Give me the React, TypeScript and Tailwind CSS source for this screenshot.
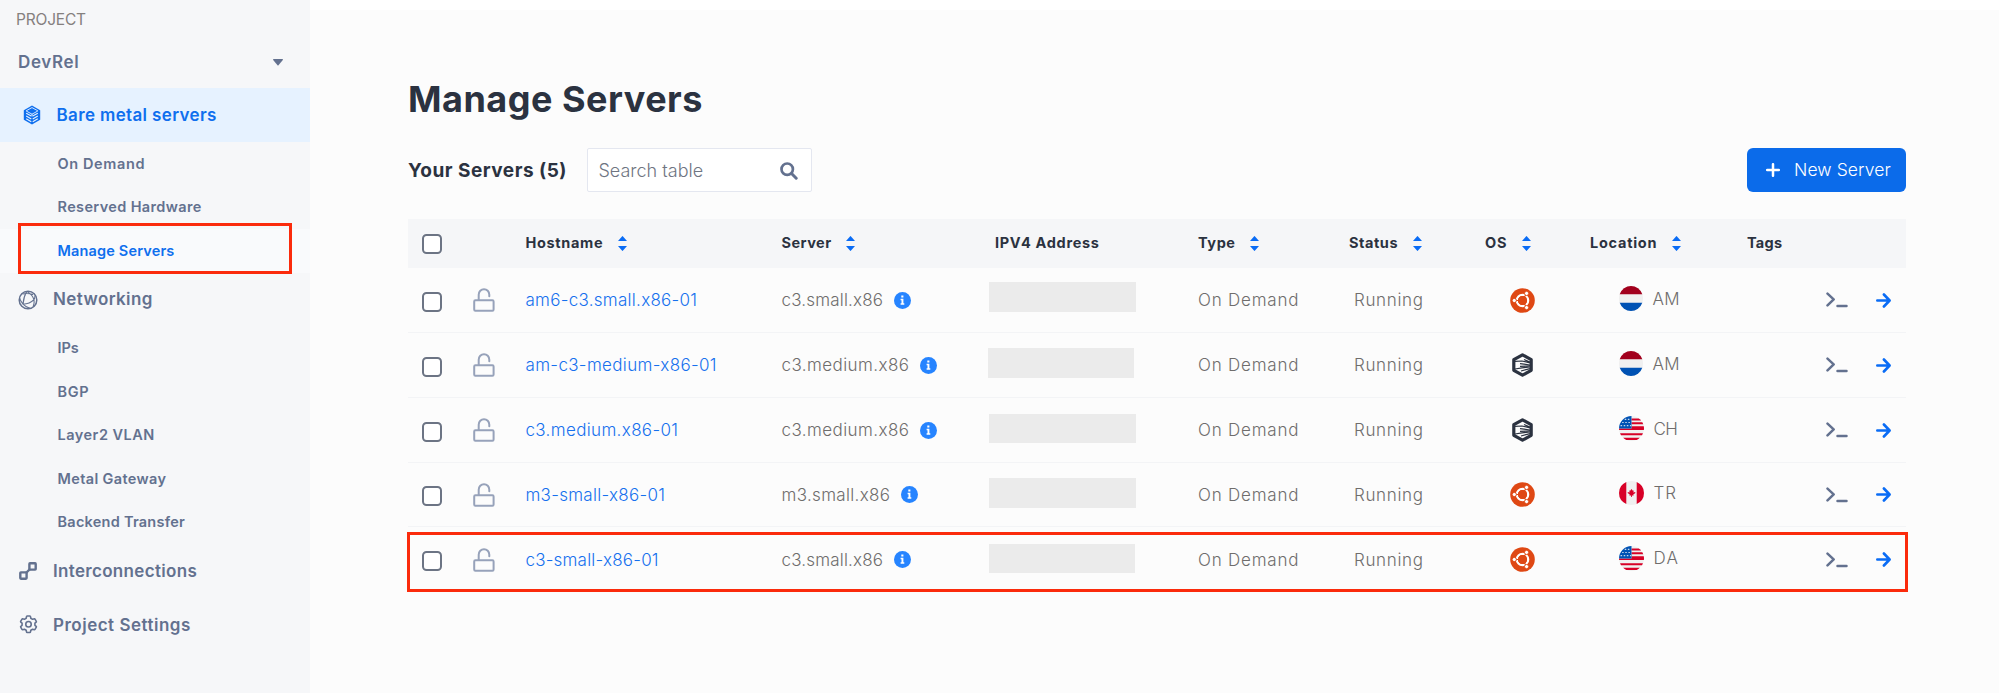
import type { ReactNode } from "react";

type Country = "NL" | "US" | "CA";

interface Row {
  host: string;
  hostTrack: string;
  server: string;
  serverTrack: string;
  ipClass: string;
  os: "ubuntu" | "rocky";
  flag: Country;
  loc: string;
  locTrack: string;
  height: string;
}

const ROWS: Row[] = [
  { host: "am6-c3.small.x86-01", hostTrack: "tracking-[0.28px]", server: "c3.small.x86", serverTrack: "tracking-[0.18px]", ipClass: "ml-[0.5px] mb-[6px]", os: "ubuntu", flag: "NL", loc: "AM", locTrack: "tracking-[0.25px]", height: "h-[65px]" },
  { host: "am-c3-medium-x86-01", hostTrack: "tracking-[0.34px]", server: "c3.medium.x86", serverTrack: "tracking-[0.43px]", ipClass: "-ml-[1px] mb-[4px]", os: "rocky", flag: "NL", loc: "AM", locTrack: "tracking-[0.25px]", height: "h-[65px]" },
  { host: "c3.medium.x86-01", hostTrack: "tracking-[0.35px]", server: "c3.medium.x86", serverTrack: "tracking-[0.43px]", ipClass: "ml-[0.5px] mb-[3px]", os: "rocky", flag: "US", loc: "CH", locTrack: "tracking-[-0.6px]", height: "h-[65px]" },
  { host: "m3-small-x86-01", hostTrack: "tracking-[0.28px]", server: "m3.small.x86", serverTrack: "tracking-[0.33px]", ipClass: "ml-[0.5px] mb-[3px]", os: "ubuntu", flag: "CA", loc: "TR", locTrack: "tracking-[0.9px]", height: "h-[64px]" },
  { host: "c3-small-x86-01", hostTrack: "tracking-[0.2px]", server: "c3.small.x86", serverTrack: "tracking-[0.18px]", ipClass: "mb-[2px]", os: "ubuntu", flag: "US", loc: "DA", locTrack: "tracking-[1.2px]", height: "h-[65px]" },
];

const GRID =
  "grid grid-cols-[51px_52.5px_256px_207px_209.5px_151px_136px_105px_157px_79px_50px_30px] pl-[14px] items-center";

function CubeIcon() {
  return (
    <svg width="18" height="20" viewBox="0 0 18 20" fill="none">
      <path d="M9 .6 17.2 5.2V14.8L9 19.4.8 14.8V5.2Z" fill="#0f6fee" />
      <path d="M3.200 8.200 8.300 11.100M3.200 11 8.300 13.900M3.200 13.800 8.300 16.700M14.800 8.200 9.700 11.100M14.800 11 9.700 13.900M14.800 13.800 9.700 16.700" stroke="#e6f2ff" strokeWidth="1.100" />
      <path d="M9 9v2.500M3.200 5.800 9 2.600l5.800 3.200" stroke="#e6f2ff" strokeWidth=".9" />
      <path d="M3.200 6 9 9.200 14.800 6" stroke="#e6f2ff" strokeWidth=".9" />
    </svg>
  );
}

function GlobeIcon() {
  return (
    <svg width="20" height="20" viewBox="0 0 20 20" fill="none" stroke="#63718f" strokeWidth="1.1">
      <circle cx="10" cy="10" r="8.8" strokeWidth="1.5" />
      <path d="M8.800 1.400C6.600 5 5.400 9 5 14.200M8.800 1.400c3.400 2 6 4.600 7.200 8.200M5 14.200c4.400-.2 8.200-1.800 11-4.600M5 14.200C3.400 12 2 10 1.600 8M5 14.200c2 2 4.400 3.600 7 4.200M16 9.600c.4 2.600.2 5-.8 7M16 9.600c.8-1.200 1-2.600 1-4M4.400 4c3.400-.8 7.200-.6 10.800.6" />
    </svg>
  );
}

function LinkIcon() {
  return (
    <svg width="18" height="18" viewBox="0 0 18 18" fill="none" stroke="#63718f" strokeWidth="2.4" className="ml-px">
      <rect x="1.3" y="10.4" width="6.300" height="6.300" rx=".6" />
      <rect x="10.400" y="1.300" width="6.300" height="6.300" rx=".6" />
      <path d="M7 11 11 7" />
    </svg>
  );
}

function GearIcon() {
  return (
    <svg width="19" height="20" viewBox="0 0 18 19" fill="none" stroke="#63718f" strokeWidth="1.5" strokeLinejoin="round" className="ml-[0.5px]">
      <path d="M7.700 1h2.600q.5.100.6.600l.3 1.500 1.700 1 1.500-.5q.5-.2.800.3l1.200 2.100q.300.5-.1.800l-1.200 1v2l1.200 1q.400.4.1.800l-1.200 2.100q-.300.5-.8.300l-1.500-.5-1.700 1-.3 1.500q-.1.600-.6.600H7.700q-.5 0-.6-.6l-.3-1.500-1.700-1-1.500.5q-.5.200-.8-.3l-1.200-2.100q-.300-.5.1-.8l1.200-1v-2l-1.200-1q-.400-.4-.1-.8l1.200-2.100q.300-.5.8-.3l1.500.5 1.700-1 .3-1.500q.1-.5.600-.600Z" />
      <circle cx="9" cy="8.800" r="2.600" />
    </svg>
  );
}

function SortIcon() {
  return (
    <svg width="9" height="15" viewBox="0 0 9 15" fill="#0a6cf5" className="shrink-0">
      <path d="M4.200.2q.3-.3.600 0L9 5H0ZM4.200 14.800q.3.300.6 0L9 10H0Z" />
    </svg>
  );
}

function LockIcon() {
  return (
    <svg width="22" height="24" viewBox="0 0 22 24" fill="none" stroke="#97a2ba" strokeWidth="2">
      <rect x="1.200" y="12.200" width="19.400" height="10.600" rx="1.200" />
      <path d="M5.700 12V6.700a5.300 5.500 0 0 1 10.600 0V8.200" strokeLinecap="round" />
    </svg>
  );
}

function InfoIcon() {
  return (
    <svg width="17" height="17" viewBox="0 0 17 17" className="shrink-0">
      <circle cx="8.500" cy="8.500" r="8.500" fill="#2684ff" />
      <path d="M7.300 3.600h2.100v2H7.300ZM6.600 6.800h2.800v4.500h.9v1.400H6.600v-1.400h.9V8.200h-.9Z" fill="#fff" />
    </svg>
  );
}

function UbuntuIcon() {
  return (
    <svg width="25" height="25" viewBox="0 0 25 25" fill="none">
      <circle cx="12.500" cy="12.500" r="12.300" fill="#df4814" />
      <circle cx="12.500" cy="12.500" r="5.700" stroke="#fff" strokeWidth="2.200" />
      <path d="M12.500 12.500 3 12.500M12.500 12.500 17.200 4.300M12.500 12.500 17.200 20.700" stroke="#df4814" strokeWidth="1.200" />
      <circle cx="12.500" cy="12.500" r="4.500" fill="#df4814" />
      <g fill="#fff" stroke="#df4814" strokeWidth=".9">
        <circle cx="4.300" cy="12.500" r="2.100" />
        <circle cx="16.600" cy="5.400" r="2.100" />
        <circle cx="16.600" cy="19.600" r="2.100" />
      </g>
    </svg>
  );
}

function RockyIcon() {
  return (
    <svg width="21" height="24" viewBox="0 0 21 24" fill="none">
      <path d="M10.500 1.800 19.200 6.700V17.300L10.500 22.200 1.800 17.300V6.700Z" fill="#fcfcfc" stroke="#2b3240" strokeWidth="3.200" strokeLinejoin="round" />
      <path d="M3 8.300 10 8 18 9.800M8 10.700 18 12M8 13.300 18 13M3 16 10 14.800 18 14M9 18 18 15.600M12 6.500 18 9" stroke="#2b3240" strokeWidth="1.200" />
    </svg>
  );
}

function Flag({ code }: { code: Country }) {
  if (code === "NL") {
    return (
      <svg width="24" height="25" viewBox="0 0 24 24" preserveAspectRatio="none">
        <circle cx="12" cy="12" r="12" fill="#f0f0f0" />
        <path d="M.7 8a12 12 0 0 1 22.600 0Z" fill="#a2001d" />
        <path d="M.7 16a12 12 0 0 0 22.600 0Z" fill="#0052b4" />
      </svg>
    );
  }
  if (code === "CA") {
    return (
      <svg width="25" height="24" viewBox="0 0 24 24" preserveAspectRatio="none">
        <circle cx="12" cy="12" r="12" fill="#f0f0f0" />
        <path d="M7 1.100a12 12 0 0 0 0 21.800ZM17 1.100a12 12 0 0 1 0 21.800Z" fill="#d80027" />
        <path d="m12 7.900-1.300 1.800-.9-.3.400 2-1.700-.5-.2 1.200 2 1.500-.4.900h1.700v1.600h.8v-1.600h1.700l-.4-.9 2-1.500-.2-1.200-1.700.5.400-2-.9.300Z" fill="#d80027" />
      </svg>
    );
  }
  return (
    <svg width="25" height="25" viewBox="0 0 24 24" fill="none">
      <path d="M12 0A12 12 0 1 1 0 12H12Z" fill="#f0f0f0" />
      <path d="M12 2.300h7q1.100.7 2 1.600v.3H12ZM12 6h10.400l.9 2H12ZM12 9.800h11.800q.2 1.100.2 2.200H12ZM0 12h24q0 1-.2 1.500H.200Q0 13 0 12ZM1 16.500h22l-.9 2H1.900ZM4 20.900h16q-1.400 1.400-3 2.100H7q-1.600-.7-3-2.100Z" fill="#d80027" />
      <path d="M12 0v12H0A12 12 0 0 1 12 0Z" fill="#0052b4" />
      <path d="M5.500 3.200h6M3 6.200h9M1.500 9.300h10" stroke="#c3d5ea" strokeWidth="1.100" strokeDasharray="1.500 1.500" />
    </svg>
  );
}

function TerminalIcon() {
  return (
    <svg width="22" height="16" viewBox="0 0 22 16" fill="none" stroke="#63718f" strokeWidth="2.500" strokeLinecap="round" strokeLinejoin="round">
      <path d="M1.500 1.600 7.700 7.300 1.500 13.400M11.500 14h9" />
    </svg>
  );
}

function ArrowIcon() {
  return (
    <svg width="15" height="15" viewBox="0 0 15 15" fill="none" stroke="#0a6cf5" strokeWidth="2.600" strokeLinecap="round" strokeLinejoin="round">
      <path d="M1.300 7.500h12M7.900 1.500 13.600 7.500 7.900 13.500" />
    </svg>
  );
}

function Checkbox() {
  return <div className="size-5 rounded-[4.5px] border-2 border-[#6c7484] bg-white" />;
}

function NavHeading({ icon, label, track }: { icon: ReactNode; label: string; track: string }) {
  return (
    <div className="flex h-[54px] items-center pl-[18px]">
      <span className="flex w-[35px] items-center">{icon}</span>
      <span className={`text-[17px] leading-none font-semibold ${track}`}>{label}</span>
    </div>
  );
}

function SubItem({ label, track, active = false }: { label: string; track: string; active?: boolean }) {
  return (
    <div
      className={`flex h-[43.5px] items-center pl-[57.5px] text-[14.5px] leading-none font-semibold ${track} ${active ? "bg-[#f9fafc] text-[#0f6fee]" : ""}`}
    >
      {label}
    </div>
  );
}

function Head({ label, track, gap = "", sortable = true }: { label: string; track: string; gap?: string; sortable?: boolean }) {
  return (
    <div className={`flex items-center text-[14.5px] leading-none font-bold whitespace-nowrap ${gap}`}>
      <span className={track}>{label}</span>
      {sortable && <SortIcon />}
    </div>
  );
}

export default function App() {
  return (
    <div className="relative flex h-[693px] w-[1999px] overflow-hidden bg-[#fcfcfc] font-['Inter','Liberation_Sans',sans-serif]">
      <aside className="flex w-[309.5px] shrink-0 flex-col bg-[#f6f7f9] text-[#63718f]">
        <div className="flex h-[38px] items-center pt-[2px] pl-[16px] text-[15.5px] leading-none tracking-[-0.2px] text-[#85807f]">PROJECT</div>
        <div className="flex h-[50px] items-center justify-between pr-[27px] pb-[2px] pl-[18px]">
          <span className="text-[17px] leading-none font-semibold tracking-[0.65px]">DevRel</span>
          <svg width="10" height="7" viewBox="0 0 10 7" fill="#63718f">
            <path d="M.5 0h9q.7.300.3.900L5.500 6.300q-.5.400-1 0L.2.900Q-.1.200.5 0Z" />
          </svg>
        </div>
        <div className="flex h-[54px] items-center bg-[#e6f2ff] pl-[23px] text-[#0f6fee]">
          <span className="w-[33.5px]"><CubeIcon /></span>
          <span className="text-[17px] leading-none font-semibold tracking-[0.36px]">Bare metal servers</span>
        </div>
        <SubItem label="On Demand" track="tracking-[0.62px]" />
        <SubItem label="Reserved Hardware" track="tracking-[0.36px]" />
        <SubItem label="Manage Servers" track="tracking-[0.16px]" active />
        <NavHeading icon={<GlobeIcon />} label="Networking" track="tracking-[0.4px]" />
        <SubItem label="IPs" track="" />
        <SubItem label="BGP" track="tracking-[0.7px]" />
        <SubItem label="Layer2 VLAN" track="tracking-[0.5px]" />
        <SubItem label="Metal Gateway" track="tracking-[0.36px]" />
        <SubItem label="Backend Transfer" track="tracking-[0.25px]" />
        <NavHeading icon={<LinkIcon />} label="Interconnections" track="tracking-[0.32px]" />
        <NavHeading icon={<GearIcon />} label="Project Settings" track="tracking-[0.5px]" />
      </aside>

      <main className="flex flex-1 flex-col text-[#2b3240]">
        <div className="h-[9.5px] bg-white" />
        <div className="flex flex-col pr-[93px] pl-[98.5px]">
          <h1 className="flex h-[138.5px] items-center pt-[41px] text-[36px] leading-none font-bold tracking-[0.5px]">Manage Servers</h1>
          <div className="flex h-[44px] items-center">
            <h2 className="w-[179px] text-[19px] leading-none font-bold tracking-[0.5px] whitespace-nowrap">Your Servers (5)</h2>
            <div className="flex h-[44px] w-[224.5px] items-center justify-between rounded-[2px] border border-[#e4e7f0] bg-white pt-px pr-[13px] pl-[10.5px]">
              <span className="text-[18px] leading-none font-light tracking-[0px] text-[#6f7582]">Search table</span>
              <svg width="18" height="18" viewBox="0 0 18 18" fill="none" stroke="#63718f" strokeLinecap="round">
                <circle cx="7.2" cy="7.2" r="5.7" strokeWidth="2.7" />
                <path d="m11.8 11.8 4.4 4.4" strokeWidth="3" />
              </svg>
            </div>
            <button className="ml-auto flex h-[44px] w-[159px] items-center rounded-[6px] bg-[#0b6bea] pl-[19px] text-white">
              <svg width="14" height="14" viewBox="0 0 14 14" stroke="#fff" strokeWidth="2.5" strokeLinecap="round">
                <path d="M7 1.2v11.600M1.200 7h11.600" />
              </svg>
              <span className="ml-[14px] text-[17.5px] leading-none font-light tracking-[0.1px] whitespace-nowrap">New Server</span>
            </button>
          </div>

          <div className={`mt-[27px] h-[49px] bg-[#f5f6f8] ${GRID}`}>
            <Checkbox />
            <span />
            <Head label="Hostname" track="tracking-[0.65px]" gap="gap-[14.5px]" />
            <Head label="Server" track="tracking-[0.48px]" gap="gap-[14.5px]" />
            <div className="pl-[6.5px]"><Head label="IPV4 Address" track="tracking-[0.7px]" sortable={false} /></div>
            <Head label="Type" track="tracking-[0.57px]" gap="gap-[14.5px]" />
            <Head label="Status" track="tracking-[0.55px]" gap="gap-[14.5px]" />
            <Head label="OS" track="tracking-[0.8px]" gap="gap-[14.5px]" />
            <Head label="Location" track="tracking-[0.74px]" gap="gap-[15px]" />
            <Head label="Tags" track="tracking-[0.23px]" sortable={false} />
          </div>

          {ROWS.map((r, i) => (
            <div key={r.host} className={`text-[17px] leading-none font-light whitespace-nowrap text-[#6f6d6c] ${GRID} ${r.height} ${i < 4 ? "border-b border-[#f3f4f6]" : ""}`}>
              <div className="pt-[3px]"><Checkbox /></div>
              <LockIcon />
              <span className={`pt-px text-[#1670ee] ${r.hostTrack}`}>{r.host}</span>
              <div className="flex items-center gap-[10.5px]">
                <span className={`pt-px ${r.serverTrack}`}>{r.server}</span>
                <InfoIcon />
              </div>
              <div className={`h-[29.5px] w-[146.5px] bg-[#ebebeb] ${r.ipClass}`} />
              <span className="pt-px tracking-[0.79px]">On Demand</span>
              <span className="pt-px pl-[5px] tracking-[0.66px]">Running</span>
              <div className="flex w-[74px] justify-center">{r.os === "ubuntu" ? <UbuntuIcon /> : <RockyIcon />}</div>
              <div className="flex items-center gap-[10px] pb-[3px] pl-[28.5px]">
                <Flag code={r.flag} />
                <span className={`pt-px ${r.locTrack}`}>{r.loc}</span>
              </div>
              <span />
              <TerminalIcon />
              <ArrowIcon />
            </div>
          ))}
        </div>
      </main>

      <div className="absolute top-[223px] left-[18px] h-[51px] w-[274px] border-3 border-[#fb2b0c]" />
      <div className="absolute top-[532px] left-[407px] h-[60px] w-[1501px] border-3 border-[#fb2b0c]" />
    </div>
  );
}
